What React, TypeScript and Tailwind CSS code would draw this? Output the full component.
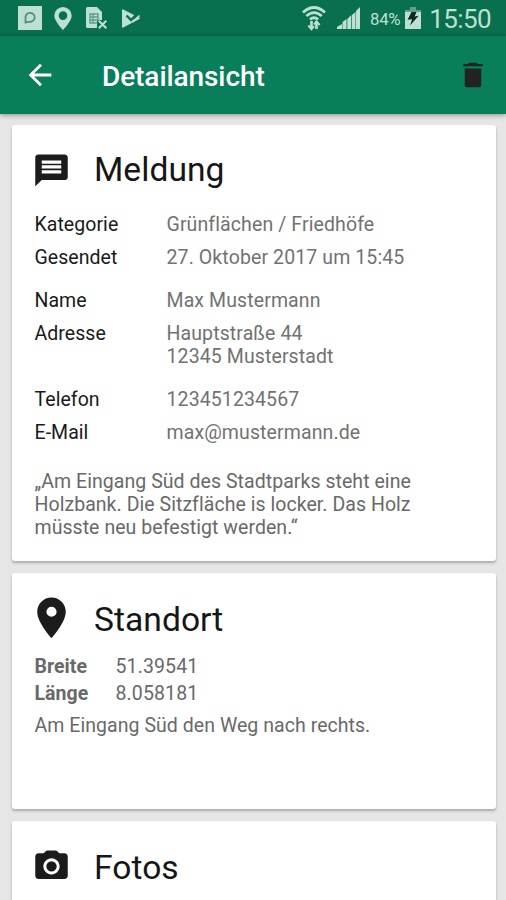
import React from "react";

const font = "font-['Roboto','Liberation_Sans',sans-serif]";

function StatusBar() {
  return (
    <header className="flex h-9 shrink-0 items-center bg-[#08704f] pl-[18px] pr-[15px] text-[#bedfd3]">
      <svg width="24" height="24" viewBox="0 0 24 24" className="shrink-0">
        <path fill="currentColor" d="M0 0h24v24H0z" />
        <path d="M7.500 16.500V11.500a4.600 4.500 0 1 1 4.600 4.300H10z" fill="none" stroke="#4f907a" strokeWidth="1.8" />
      </svg>
      <svg width="18" height="23" viewBox="0 0 18 23" className="ml-[12px] shrink-0">
        <path fill="currentColor" fillRule="evenodd" d="M9 0a8.700 8.700 0 0 0-8.700 8.700C.3 14 9 23 9 23s8.700-9 8.700-14.300A8.700 8.700 0 0 0 9 0zm0 4.300a4.300 4.300 0 1 1 0 8.600 4.300 4.300 0 0 1 0-8.600z" />
      </svg>
      <svg width="22" height="22" viewBox="0 0 22 22" className="ml-[14px] shrink-0" fill="none">
        <path fill="currentColor" d="M0 1.500Q0 0 1.500 0H11l5 5v8h-5v8H1.500Q0 21 0 19.500z" />
        <path d="M4 7h8v9H4zM4 10h8M4 13h8M7 7v9" stroke="#5c9f8a" strokeWidth="1.4" />
        <path d="M12 14l8 8M20 14l-8 8" stroke="#08704f" strokeWidth="4" />
        <path d="M12.800 13.800l7.500 7.500M20.300 13.800l-7.500 7.500" stroke="currentColor" strokeWidth="2" />
      </svg>
      <svg width="18" height="19" viewBox="0 0 18 19" className="ml-[14px] shrink-0" fill="none">
        <path fill="currentColor" d="M0 1Q0 0 1.200.5L17 8.500q1.500.9 0 1.800L1.200 18.600Q0 19 0 18z" />
        <path d="M10.500 12.500L18 5V3.500L16 2z" fill="#08704f" />
        <path d="M4.500 6.500l4.500 4.500L16 4" stroke="#08704f" strokeWidth="2.400" />
        <path d="M10.500 13L17.500 6.500" stroke="currentColor" strokeWidth="1.600" />
      </svg>
      <svg width="24" height="26" viewBox="0 0 24 26" className="ml-[162px] shrink-0" fill="none" stroke="currentColor" strokeWidth="2.800">
        <path d="M1 7.500Q12-2.500 23 7.500M4.300 11Q12 4.200 19.700 11M8 14.500Q12 11 16 14.500" />
        <path d="M9.500 24v-8M14.500 16v8" strokeWidth="2.600" />
        <path d="M6.300 20.500l3.200 3.700 2.500-3M12 19.500l2.500-3 3.200 3.500" strokeWidth="2" />
      </svg>
      <svg width="24" height="22" viewBox="0 0 24 22" className="ml-[11px] shrink-0" fill="currentColor">
        <path d="M0 22v-2l5-3v5zM5.500 22v-7l4-3v10zM10.300 22V12l4-4v14zM15 22V8l3.500-3v17zM19 22V4L23 0v22z" />
      </svg>
      <span className="ml-[9px] mt-[2px] w-[32px] whitespace-nowrap text-[16.8px] leading-none tracking-[-0.3px]">84%</span>
      <svg width="16" height="22" viewBox="0 0 16 22" className="ml-[3px] shrink-0">
        <path fill="#639f8a" d="M5 0h6v3h5v5H0V3h5z" />
        <path fill="currentColor" d="M0 5h16v17H0z" />
        <path fill="#082d20" d="M6.500 5h5L9.600 9.500l4-.8-8.500 9.800 2-6.200-4.500.4z" />
      </svg>
      <span className="ml-auto mt-px whitespace-nowrap text-[26px] leading-none tracking-[-0.6px]">15:50</span>
    </header>
  );
}

function Toolbar() {
  return (
    <div className="z-10 flex h-[78px] shrink-0 items-center bg-[#087e5b] pl-[23px] pr-[16px] text-white shadow-[0_1px_5px_rgba(0,0,0,0.4)]">
      <svg width="34" height="34" viewBox="0 0 24 24" fill="currentColor">
        <path d="M20 11H7.830l5.590-5.590L12 4l-8 8 8 8 1.410-1.410L7.830 13H20v-2z" />
      </svg>
      <h1 className="ml-[45px] mt-[3px] text-[28px] font-medium leading-8 tracking-[-0.08px]">Detailansicht</h1>
      <svg width="34" height="34" viewBox="0 0 24 24" className="ml-auto" fill="#222222">
        <path d="M6.200 19.200c0 .9.700 1.400 1.500 1.400h8.600c.8 0 1.500-.5 1.500-1.400V7.400H6.200zM18.900 4.200h-3.400l-1-.9h-5l-1 .9H5.100v1.600h13.800z" />
      </svg>
    </div>
  );
}

function CardTitle({ icon, size, children }: { icon: string; size: number; children: React.ReactNode }) {
  return (
    <div className="flex h-[50px] items-center">
      <div className="flex w-[59.5px] shrink-0">
        <div className="flex w-[34px] justify-center">
          <svg width={size} height={size} viewBox="0 0 24 24" className="shrink-0" fill="#1c1c1c">
            <path d={icon} />
          </svg>
        </div>
      </div>
      <h2 className="mt-[2px] text-[33.6px] font-normal leading-10 text-[#161616]">{children}</h2>
    </div>
  );
}

function Row({ label, children, className }: { label: string; children: React.ReactNode; className: string }) {
  return (
    <div className={"flex " + className}>
      <dt className="w-[132px] shrink-0 text-[#1a1a1a]">{label}</dt>
      <dd className="tracking-[0.11px] text-[#727272]">{children}</dd>
    </div>
  );
}

const card = "shrink-0 rounded-[3px] bg-white pl-[23px] shadow-[0_2px_3px_rgba(0,0,0,0.27)]";

export default function App() {
  return (
    <div className={"flex h-[900px] w-[506px] flex-col overflow-hidden bg-[#e6e6e6] " + font}>
      <StatusBar />
      <Toolbar />
      <main className="flex min-h-0 flex-1 flex-col gap-3 overflow-hidden pl-[11.5px] pr-[10.5px] pt-[11px] text-[19.5px] leading-[23px] tracking-[0.05px]">
        <section className={card + " h-[436px] pt-[19px]"}>
          <CardTitle size={39} icon="M20 2.700H4c-1.100 0-1.990.7-1.990 1.700L2 22.300l4-3.800h14c1.100 0 2-.8 2-1.800V4.400c0-1-.9-1.700-2-1.700zM18 14.400H6v-2h12v2zm0-3H6v-2h12v2zm0-3H6v-2h12v2z">Meldung</CardTitle>
          <dl>
            <Row label="Kategorie" className="mt-[19px]">Grünflächen / Friedhöfe</Row>
            <Row label="Gesendet" className="mt-[10px]">27. Oktober 2017 um 15:45</Row>
            <Row label="Name" className="mt-5">Max Mustermann</Row>
            <Row label="Adresse" className="mt-[10px]">Hauptstraße 44<br />12345 Musterstadt</Row>
            <Row label="Telefon" className="mt-5">123451234567</Row>
            <Row label="E-Mail" className="mt-[9.500px]">max@mustermann.de</Row>
          </dl>
          <p className="mt-[26px] text-[#696969]">
            „Am Eingang Süd des Stadtparks steht eine<br />
            Holzbank. Die Sitzfläche is locker. Das Holz<br />
            müsste neu befestigt werden.“
          </p>
        </section>
        <section className={card + " h-[236px] pt-[21px]"}>
          <CardTitle size={49} icon="M12 1.200c-3.870 0-7 3.130-7 7 0 5.250 7 13 7 13s7-7.750 7-13c0-3.870-3.130-7-7-7zm0 9.500a2.500 2.500 0 0 1 0-5 2.500 2.500 0 0 1 0 5z">Standort</CardTitle>
          <dl className="mt-[11px] text-[#696969]">
            <div className="flex"><dt className="w-[81px] font-bold">Breite</dt><dd className="tracking-[0.12px]">51.39541</dd></div>
            <div className="mt-1 flex"><dt className="w-[81px] font-bold">Länge</dt><dd className="tracking-[0.12px]">8.058181</dd></div>
          </dl>
          <p className="mt-[9px] text-[#696969]">Am Eingang Süd den Weg nach rechts.</p>
        </section>
        <section className={card + " h-[150px] pt-[21px]"}>
          <CardTitle size={39} icon="M12 8.100a3.200 3.200 0 1 0 0 6.400 3.200 3.200 0 1 0 0-6.400zM9 1.500L7.170 3.300H4c-1.100 0-2 .9-2 2v11.700c0 1.100.9 2 2 2h16c1.100 0 2-.9 2-2V5.300c0-1.100-.9-2-2-2h-3.170L15 1.500H9zm3 14.800c-2.760 0-5-2.240-5-5s2.240-5 5-5 5 2.240 5 5-2.240 5-5 5z">Fotos</CardTitle>
        </section>
      </main>
    </div>
  );
}
